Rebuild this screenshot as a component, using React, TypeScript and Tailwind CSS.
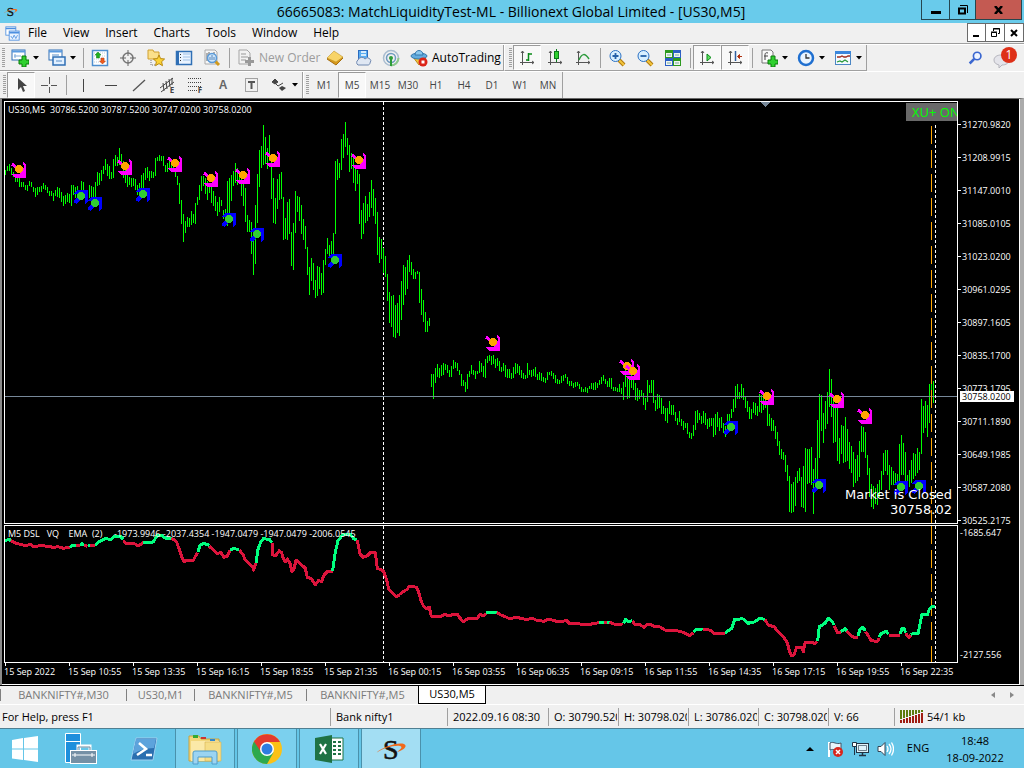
import React from 'react';

type Run = { x: number; top: number; bars: string };
type Stretch = { x: number; top: number; parts: string[] };

// high-low pairs, one bar every two pixels, three ticks to a pixel
const RUNS: Run[] = [
  {
    x: 5,
    top: 98,
    bars: `216-230 204-220 198-218 210-230 222-236 236-252 236-252 240-266 252-266 252-266 262-275 262-278 249-264 252-268 267-281
      270-297 268-290 267-282 265-282 255-272 262-275 267-285 280-293 280-293 285-308 275-293 267-297 269-299 282-311 295-323
      290-318 285-311 287-314 261-323 261-290 267-300 265-300 280-300 250-285 252-285 280-310 290-310 261-300 264-300 268-300
      252-300 222-263 225-260 217-250 204-227 183-215 198-235 205-243 222-243 183-240 171-205 178-203 150-200 168-210 190-240
      200-255 215-268 238-262 240-268 240-265 243-275 262-290 255-290 230-280 226-270 210-245 208-240 218-250 220-241 222-240
      180-234 178-190 171-188 173-188 174-205 200-222 195-222 190-215 185-215 190-220 222-238 233-262 255-318 305-377 348-432
      370-405 357-388 360-387 340-382 347-375 316-378 298-320 261-305 233-278 235-265 240-288 250-305 255-285 260-315 280-323
      293-340 312-353 296-343 305-325 336-362 333-370 250-385 240-350 231-310 219-265 195-255 210-260 222-258 235-295 254-323
      270-371 350-402 367-403 372-467 420-530 321-498`,
  },
  {
    x: 257,
    top: 98,
    bars: `228-375 156-267 144-210 81-201 117-198 150-212 111-190 170-303 240-375 300-377 243-333 228-306 222-303 297-426 360-422
      312-426 303-408 402-504 375-516 279-405 294-342 297-369 321-408 363-426 384-453 447-531 507-591 480-549 495-576 546-600
      504-594 507-573 525-591 486-585 453-501 420-468 441-475 429-470 405-468 189-408 183-246 195-240 123-216 108-180 72-147
      120-171 141-222 165-213 180-255 200-279 216-258 228-378 336-423 315-408 294-375 318-369 282-357 246-330 273-354 300-378
      342-471 417-495 423-483 450-525 474-537 528-610 582-675 594-687 591-717 621-720 615-705 591-714 549-666 501-621 507-591
      486-573 471-522 492-531 513-543 522-543 519-528 522-615 573-651 606-672 642-702 669-702 660-683`,
  },
  {
    x: 431,
    top: 320,
    bars: `162-201 162-237 144-189 132-171 144-174 135-168 129-165 132-150 135-159 150-171 138-171 120-147 126-144 129-153 150-165
      162-198 180-198 186-216 162-207 153-171 135-162 150-165 153-177 153-162 123-159 129-156 138-171 117-174 108-129 105-123
      108-135 105-132 117-144 114-138 123-153 141-156 129-153 135-171 147-174 147-174 159-177 141-174 129-162 132-159 138-165
      150-174 159-177 165-177 129-174 150-165 150-171 147-168 141-171 162-180 156-180 159-183 171-186 174-189 156-180 156-165
      153-168 159-177 165-189 177-192 180-192 168-189 165-183 162-174 171-192 183-198 183-198 189-204 186-201 186-198 192-207
      201-216 207-216 201-216 204-219 198-207 189-207 189-210 186-210 189-204 180-195 171-192 165-183 177-192 183-201 174-201
      174-207 201-213 201-213 204-216 192-216 204-222 186-240 150-201 170-237 170-234 165-204 180-210 189-240 204-243 210-237
      210-231 219-255 234-270 180-246 195-219 180-219 180-249 240-273 222-267 225-264 234-282 258-282 264-303 264-309 243-282
      255-285 255-285 276-303 294-315 273-306 297-318 303-330 309-324 309-342 336-354 339-357 315-348 273-330 270-309 279-300
      288-312 273-309 279-315 297-327 294-321 294-318 294-351 282-345 276-321 294-333`,
  },
  {
    x: 721,
    top: 350,
    bars: `201-234 219-249 228-261 192-225 192-225 177-205 147-186 108-174 102-147 126-147 102-144 114-150 141-174 153-186 171-207
      177-207 156-189 159-195 168-198 132-186 135-189 140-180 145-175 165-228 192-228 204-243 210-243 228-267 246-288 273-315
      297-327 306-330 315-366 345-393 378-486 402-489 396-486 381-468 363-399 354-393 381-471 348-474 294-486 297-402 297-399
      291-405 357-492 324-390 210-390 132-324 135-243 189-279 153-237 126-222 57-171 87-201 150-279 165-276 174-333 264-342
      225-312 228-339 201-336 237-333 276-357 288-369 306-411 327-399 315-393 273-381 228-306 231-306 246-324 315-375 354-441
      402-471 408-477 414-462 402-465 390-441 363-420 309-375 300-363 300-375 345-420 351-405 363-405 369-400 372-400 282-405
      255-375 279-375 306-400 375-410 360-410 330-400 309-387 312-378 294-369 306-360 147-312 168-249 153-234 165-261 102-219
      93-168 93-159`,
  },
];

// "u" parts are rising, "d" parts falling
const STRETCHES: Stretch[] = [
  {
    x: 0,
    top: 520,
    parts: [
      'u 16,60 22,60 28,58 32,62',
      'd 32,62 48,70 68,75 80,77 90,72 98,79 130,77 160,82 175,80 190,85 210,82',
      'u 210,82 215,77 230,77',
      'd 228,77 240,77',
      'u 240,75 246,71 252,75',
      'd 252,75 262,79',
      'u 264,77 272,74',
      'd 270,77 284,77',
      'u 286,76 300,63 316,56 332,58 345,48 362,50 370,58',
      'd 370,62 378,70 402,70 414,78 424,72 430,66',
      'u 430,67 445,66 460,66 470,48 485,46 495,54 515,54',
      'd 515,54 530,66 548,118 553,125 560,121 580,121 592,98',
      'u 594,95 600,76 610,70 628,76',
      'd 628,79 640,90 652,101 662,97 672,112 682,108 690,92',
      'u 690,90 700,86 718,88',
      'd 718,90 730,106 736,120 748,132 758,140 761,150 768,130',
      'u 768,128 774,88 782,66 790,56 808,58 816,68',
      'd 816,68 818,104 826,108 838,92 845,98 850,115 856,125 862,117 870,130 876,155 882,148 888,120 900,130 916,145 922,172 934,176 946,194 955,182 965,184 972,165 982,155 998,153',
      'u 998,152 1006,95 1014,62 1028,44 1050,42 1060,55 1070,60',
      'd 1072,60 1080,102 1090,112 1104,106 1110,98 1126,98 1132,145 1150,152 1160,180 1166,208 1188,230 1200,225',
    ],
  },
  {
    x: 400,
    top: 580,
    parts: [
      'd 0,44 12,33 22,28 27,18 50,22 58,42 64,65 72,80 78,86 88,82 94,108 125,108 135,103 148,108 160,103 172,103 178,112 190,125 205,115 232,115 240,103 250,108 258,100',
      'u 258,98 290,98',
      'd 290,98 305,106 320,112 328,116 350,112 375,118 400,116 410,121 420,120 430,125 445,118 462,121 470,125 500,122 508,130 530,130 545,133 570,133 597,128',
      'u 597,127 612,127',
      'd 612,127 620,127',
      'u 620,127 630,127',
      'd 628,127 645,133 668,132',
      'u 670,130 677,118 685,126 696,122',
      'd 697,123 706,135 718,133 732,142 742,133 755,135 765,141 775,138 795,150 820,150 850,157 870,167 880,158',
      'u 880,156 888,148 908,147',
      'd 908,147 932,151 942,161 975,162',
      'u 975,159 995,145 1004,118 1022,117',
    ],
  },
  {
    x: 700,
    top: 520,
    parts: [
      'u 120,295 132,298 145,310 165,305 178,295 195,298',
      'd 195,299 205,315 222,320 234,335 250,350 262,368 268,392 275,407 282,405 290,382 305,382 310,395 316,366 335,366 345,371 352,364',
      'u 353,362 358,320 375,310 385,295 395,303 403,315',
      'd 403,317 412,337 422,337',
      'u 422,335 436,326 440,332',
      'd 440,333 452,346 462,352 474,352',
      'u 474,348 480,328 488,322 496,332',
      'd 497,335 514,362 532,364 538,355',
      'u 538,352 542,342 558,333 566,342',
      'd 566,345 600,346',
      'u 600,342 606,326 612,326 617,338',
      'd 617,340 626,352 632,346',
      'u 632,344 640,340 655,340 662,300 666,284 682,285 688,268 698,259 706,259',
    ],
  },
];

const SELLS = [[19, 169], [125, 166], [175, 163], [211, 178], [243, 175], [273, 158], [359, 160], [493, 342], [627, 366], [633, 371], [767, 396], [837, 399], [865, 415]];
const BUYS = [[81, 196], [95, 203], [143, 194], [229, 219], [257, 234], [335, 260], [731, 427], [819, 485], [901, 487], [919, 486]];

const PRICES = ['31270.9820', '31208.9915', '31147.0010', '31085.0105', '31023.0200', '30961.0295', '30897.1605', '30835.1700', '30773.1795', '30711.1890', '30649.1985', '30587.2080', '30525.2175'];
const TIMES = ['15 Sep 2022', '15 Sep 10:55', '15 Sep 13:35', '15 Sep 16:15', '15 Sep 18:55', '15 Sep 21:35', '16 Sep 00:15', '16 Sep 03:55', '16 Sep 06:35', '16 Sep 09:15', '16 Sep 11:55', '16 Sep 14:35', '16 Sep 17:15', '16 Sep 19:55', '16 Sep 22:35'];
const MENUS = ['File', 'View', 'Insert', 'Charts', 'Tools', 'Window', 'Help'];
const FRAMES = ['M1', 'M5', 'M15', 'M30', 'H1', 'H4', 'D1', 'W1', 'MN'];

const barsPath = RUNS.map((run) =>
  run.bars.trim().split(/\s+/).map((pair, i) => {
    const [hi, lo] = pair.split('-').map((n) => run.top + Math.round(Number(n) / 3));
    return `M${run.x + i * 2 + 0.5} ${hi}V${lo}`;
  }).join('')
).join('');

const lines = STRETCHES.flatMap((s) =>
  s.parts.map((part) => {
    const [dir, ...pts] = part.split(' ');
    const points = pts.map((p) => {
      const [x, y] = p.split(',').map(Number);
      return `${(s.x + x / 3).toFixed(1)},${(s.top + y / 3).toFixed(1)}`;
    }).join(' ');
    return { up: dir === 'u', points };
  })
);

const Grip = () => (
  <span className="flex w-1.5 shrink-0 items-center justify-center">
    <span className="h-5 w-[3px] bg-[repeating-linear-gradient(#a0a0a0_0_1px,#f0f0f0_1px_2px)]" />
  </span>
);

const Sep = () => (
  <span className="flex w-1.5 shrink-0 items-center justify-center">
    <span className="h-5 w-px bg-[#a0a0a0]" />
  </span>
);

const Caret = () => (
  <svg width="6" height="4" viewBox="0 0 6 4" className="shrink-0"><path d="M0 0h6L3 3.5z" fill="#000" /></svg>
);

const Tool = ({ label, pressed = false, caret = false, children }: { label: string; pressed?: boolean; caret?: boolean; children: React.ReactNode }) => (
  <button
    aria-label={label}
    className={`flex shrink-0 items-center border ${caret ? 'w-[37px]' : 'w-7'} ${pressed ? 'border-t-[#9a9a9a] border-r-white border-b-white border-l-[#9a9a9a] bg-[#f8f8f8]' : 'border-transparent'}`}
  >
    <span className="flex w-[26px] shrink-0 justify-center">{children}</span>
    {caret && <Caret />}
  </button>
);

const Icon = ({ size = 18, children }: { size?: number; children: React.ReactNode }) => (
  <svg width={size} height={size} viewBox="0 0 18 18" fill="none" className="shrink-0">{children}</svg>
);

const Axes = () => (
  <path d="M4.500 2v14M2 13.500h14M3 4l1.500-2 1.500 2M14 12l2 1.500-2 1.500" stroke="#555" />
);

const Plus = () => (
  <path d="M11 7h4v4h3v4h-3v3h-4v-3H8v-4h3z" fill="#2fd02f" stroke="#0a7a0a" />
);

const Lens = ({ minus = false }: { minus?: boolean }) => (
  <Icon>
    <path d="M11 11l5 5" stroke="#b07a10" strokeWidth="4" />
    <path d="M11 11l5 5" stroke="#f3c43c" strokeWidth="2" />
    <circle cx="7.500" cy="7" r="5.500" fill="#d8efff" stroke="#2d72c4" />
    <path d={minus ? 'M4.500 7h6' : 'M4.500 7h6M7.500 4v6'} stroke="#2560a8" strokeWidth="1.800" />
  </Icon>
);

const Swoosh = ({ size }: { size: number }) => (
  <svg width={size} height={size} viewBox="0 0 32 32" fill="none">
    <text x="8" y="26" fontSize="28" fontFamily="Liberation Serif, serif" fill="#111" stroke="#111" strokeWidth=".6">S</text>
    <path d="M1 20C8 14 22 9 29 11c4 2 0 6-7 8 4-3 6-5 3-6-6-1-17 2-24 7z" fill="#f26a1b" />
  </svg>
);

const TitleBar = () => (
  <header className="relative flex h-[23px] items-center bg-[#69cbeb] pr-5 pl-[3px]">
    <Swoosh size={15} />
    <h1 className="flex-1 text-center text-[14px] leading-5">66665083: MatchLiquidityTest-ML - Billionext Global Limited - [US30,M5]</h1>
    <div className="absolute top-0 right-0.5 flex h-5 border border-t-0 border-[#25464f]">
      <button aria-label="Minimize" className="flex w-7 items-center justify-center border-r border-[#25464f]"><svg width="10" height="8"><path d="M0 5h10v3H0z" /></svg></button>
      <button aria-label="Restore" className="flex w-[26px] items-center justify-center border-r border-[#25464f]">
        <svg width="10" height="10" fill="none"><path d="M1 3.500h6v5H1z" stroke="#000" strokeWidth="2" /><path d="M2 .5h7.500V8" stroke="#000" /></svg>
      </button>
      <button aria-label="Close" className="flex w-[45px] items-center justify-center bg-[#c45a52]"><svg width="9" height="8"><path d="M1 0l7 8M8 0L1 8" stroke="#000" strokeWidth="2.500" /></svg></button>
    </div>
  </header>
);

const MenuBar = () => (
  <nav className="flex h-[21px] items-center border-b border-[#a0a0a0] pl-[5px] text-[12px]">
    <Icon size={15}>
      <rect x="1" y="1" width="12" height="10" fill="#fff" stroke="#4d8fe0" />
      <rect x="5" y="6" width="12" height="11" fill="#eaf3ff" stroke="#4d8fe0" />
      <path d="M1 3h12M5 8h12" stroke="#4d8fe0" strokeWidth="2" />
      <path d="M7 12l2 3 2-4 2 4 2-4" stroke="#4d8fe0" />
    </Icon>
    <ul className="flex flex-1 gap-4 pl-2">
      {MENUS.map((m) => <li key={m}><button>{m}</button></li>)}
    </ul>
    <div className="flex h-[19px] shrink-0 self-start border border-[#6a6a6a] bg-white">
      <button aria-label="Minimize chart" className="flex w-[18px] items-center justify-center border-r border-[#6a6a6a]"><svg width="7" height="8"><path d="M0 6h6v2H0z" /></svg></button>
      <button aria-label="Restore chart" className="flex w-[19px] items-center justify-center border-r border-[#6a6a6a]">
        <svg width="9" height="9" fill="none"><path d="M.5 4.500h5v4h-5zM2.500 3V.5h6v5H7M0 4h6M2 1h7" stroke="#000" /></svg>
      </button>
      <button aria-label="Close chart" className="flex w-[18px] items-center justify-center"><svg width="8" height="8"><path d="M1 1l6 6M7 1L1 7" stroke="#000" strokeWidth="2" /></svg></button>
    </div>
  </nav>
);

const StandardBar = () => (
  <div className="flex h-[27px] justify-between border-t border-white text-[12px]">
    <div className="flex border-r border-b border-[#a0a0a0]">
      <Grip />
      <Tool label="New chart" caret><Icon><rect x="1" y="1" width="13" height="10" fill="#fff" stroke="#2f6fb5" /><path d="M1 2.500h13" stroke="#5a9be0" strokeWidth="2" /><path d="M4 5v4M3 7h7" stroke="#7aa7d8" /><Plus /></Icon></Tool>
      <Tool label="Profiles" caret><Icon><rect x="1" y="1" width="13" height="10" fill="#fff" stroke="#2f6fb5" /><path d="M1 2.500h13" stroke="#5a9be0" strokeWidth="2" /><rect x="5" y="8" width="12" height="8" fill="#e2f0ff" stroke="#2f6fb5" strokeWidth="1.500" /><path d="M4 6h7M8 12h6" stroke="#5a8fc8" /></Icon></Tool>
      <Sep />
      <Tool label="Market Watch"><Icon><rect x="1.500" y="1.500" width="15" height="15" fill="#fff" stroke="#4d8fd0" strokeWidth="1.500" /><path d="M3 4h12M3 7h12M3 10h12M3 13h12" stroke="#bcd" strokeDasharray="1 1" /><path d="M7 3l3 3H8.500v3h-3V6H4z" fill="#1fb01f" stroke="#0c800c" strokeWidth=".5" /><path d="M11.500 15l-3-3H10V9h3v3h1.500z" fill="#ef5a1c" stroke="#b03a0c" strokeWidth=".5" /></Icon></Tool>
      <Tool label="Navigator"><Icon><circle cx="9" cy="9" r="5" stroke="#777" strokeWidth="1.500" /><path d="M9 1v6M9 11v6M1 9h6M11 9h6" stroke="#666" /></Icon></Tool>
      <Tool label="Favorites"><Icon><path d="M1 3V1h5l1 2h5v7H1z" fill="#fbe08a" stroke="#d0a030" /><path d="M4 11v5h4" stroke="#777" strokeDasharray="1 1" /><path d="M12 6l1.600 3.600 4 .4-3 2.700.9 4-3.500-2.100-3.500 2.100.9-4-3-2.700 4-.4z" fill="#fbd235" stroke="#b98a12" /></Icon></Tool>
      <Tool label="Data window"><Icon><rect x="1.500" y="2.500" width="15" height="13" fill="#eaf4ff" stroke="#2f6fb5" strokeWidth="1.500" /><path d="M3 3v12" stroke="#2f6fb5" strokeWidth="2" /><path d="M8 5h7M8 8h7M8 11h7" stroke="#9cc0e8" /><path d="M5.500 5v8" stroke="#333" strokeDasharray="1 2" /></Icon></Tool>
      <Tool label="Strategy tester"><Icon><path d="M2 1h10l2 2v12H2z" fill="#f6f6f6" stroke="#aaa" /><path d="M4 4v8M6 3v5M11 3v4" stroke="#666" /><path d="M12 12l4 4" stroke="#d29a1c" strokeWidth="3" /><circle cx="9" cy="9" r="4.500" fill="#cde6fb" stroke="#5b9ad8" strokeWidth="1.500" /><path d="M7 11V8M9 11V6M11 11V8" stroke="#5b86b8" /></Icon></Tool>
      <Sep />
      <button className="flex w-[89px] shrink-0 items-center pl-[5px] text-[#9c9c9c]">
        <Icon><path d="M2 1h8l3 3v11H2z" fill="#f2f2f2" stroke="#a5a5a5" /><path d="M4 5h5M4 8h7M4 11h5" stroke="#999" /><path d="M11 8h3v3h3v3h-3v3h-3v-3H8v-3h3z" fill="#999" /></Icon>
        <span className="pl-1 whitespace-nowrap">New Order</span>
      </button>
      <Tool label="MetaEditor"><Icon><path d="M1 10l7-7 9 6-7 7z" fill="#d89a1c" stroke="#a66f10" /><path d="M1 9l7-7 9 6-7 5z" fill="#f8d468" stroke="#b98a20" strokeWidth=".5" /></Icon></Tool>
      <Tool label="Hosting"><Icon><rect x="4.500" y="1.500" width="9" height="9" fill="#5aacf0" stroke="#2a6cc0" /><path d="M7 3h5M7 6h5" stroke="#fff" strokeWidth="1.500" /><path d="M4 16a3 3 0 010-5 4 4 0 017-1 3 3 0 015 4c0 1-1 2-2 2z" fill="#dfe7f3" stroke="#6f88b0" /></Icon></Tool>
      <Tool label="Signals"><Icon><circle cx="9" cy="9" r="7.500" stroke="#a9bdd0" strokeWidth="1.500" /><circle cx="9" cy="9" r="4.500" stroke="#6f9ac0" strokeWidth="1.500" /><path d="M9 16.500A7.500 7.500 0 0016.500 9" stroke="#8cc88c" strokeWidth="2" /><circle cx="9" cy="9" r="2" fill="#2e9c3a" /><path d="M9 9v8" stroke="#2e9c3a" strokeWidth="2" /></Icon></Tool>
      <button className="flex w-[98px] shrink-0 items-center pl-[5px]">
        <Icon><path d="M3 8l6 8 7-7z" fill="#f2c63c" stroke="#b88a1a" /><ellipse cx="9" cy="7" rx="8" ry="3" fill="#62acdf" stroke="#3578ad" /><path d="M5 6c0-6 8-6 8 0z" fill="#8bc8ee" stroke="#3578ad" /><circle cx="13" cy="13" r="4.500" fill="#dc2418" /><path d="M11.500 11.500h3v3h-3z" fill="#fff" /></Icon>
        <span className="pl-1">AutoTrading</span>
      </button>
    </div>
    <div className="flex border-r border-b border-l border-[#a0a0a0] border-l-white pl-0.5">
      <Grip />
      <Tool label="Bar chart" pressed><Icon><Axes /><path d="M10.500 4v8M8 11h2M11 5h3" stroke="#0a8a1a" strokeWidth="1.500" /></Icon></Tool>
      <Tool label="Candlesticks"><Icon><Axes /><path d="M10.500 0v13" stroke="#0a7a1a" /><rect x="8.500" y="2.500" width="4" height="7" fill="#2fd02f" stroke="#0a7a1a" /></Icon></Tool>
      <Tool label="Line chart"><Icon><Axes /><path d="M5 11c3-7 6-7 10-1" stroke="#2a9a3a" strokeWidth="1.500" /></Icon></Tool>
      <Sep />
      <Tool label="Zoom in"><Lens /></Tool>
      <Tool label="Zoom out"><Lens minus /></Tool>
      <Tool label="Tile windows"><Icon><path d="M1 1h8v8H1zM9 9h8v8H9z" fill="#2e9a20" /><path d="M9 1h8v8H9zM1 9h8v8H1z" fill="#2c5fc4" /><path d="M2 4h6v4H2zM10 4h6v4h-6zM2 12h6v4H2zM10 12h6v4h-6z" fill="#f0f6f0" /><path d="M3 6h4M11 6h4M3 14h4M11 14h4" stroke="#79a9a0" /></Icon></Tool>
      <Sep />
      <Tool label="Auto scroll" pressed><Icon><Axes /><path d="M9 5l4 3.500L9 12z" fill="#5fe05f" stroke="#0a8a1a" /></Icon></Tool>
      <Tool label="Chart shift" pressed><Icon><Axes /><path d="M9.500 2v10" stroke="#2f5fa0" strokeWidth="1.500" /><path d="M16 7.500h-4M13.500 5.500L11.500 7.500l2 2z" stroke="#b03010" fill="#b03010" /></Icon></Tool>
      <Sep />
      <Tool label="Indicators" caret><Icon><path d="M2 1h9l2 2v11H2z" fill="#fafafa" stroke="#777" /><path d="M8 4c-3-1-3 1-3 3v4M4 7h4" stroke="#444" /><Plus /></Icon></Tool>
      <Tool label="Periods" caret><Icon><circle cx="9" cy="9" r="7" fill="#e9f4ff" stroke="#1f6fd0" strokeWidth="2.500" /><path d="M9 5v4h3.500" stroke="#333" strokeWidth="1.300" /></Icon></Tool>
      <Tool label="Templates" caret><Icon><rect x="1.500" y="2.500" width="15" height="13" fill="#f4faff" stroke="#4b86c4" /><path d="M1 3.500h16" stroke="#3a86dc" strokeWidth="3" /><path d="M3 8h3l2-1 2 1h2l2-1h2" stroke="#a02c1c" strokeWidth="1.300" /><path d="M3 13l3-1 2 1 3-2 3 2" stroke="#2a9a3a" strokeWidth="1.300" /></Icon></Tool>
    </div>
    <div className="flex flex-1 items-center justify-end gap-2.5 pr-[7px]">
      <button aria-label="Search"><Icon size={15}><circle cx="11" cy="6" r="4.500" fill="#eef4ff" stroke="#3a66d0" strokeWidth="2" /><path d="M7.500 9.500L2 15" stroke="#3a66d0" strokeWidth="3" /></Icon></button>
      <button aria-label="Notifications" className="relative flex h-5 w-6 items-end">
        <svg width="18" height="16" viewBox="0 0 18 16"><path d="M8 3c5 0 8 2 8 5s-3 5-7 5l-3 3v-3C3 12 1 11 1 8s3-5 7-5z" fill="#e4e4ea" stroke="#b5b5bd" /></svg>
        <span className="absolute -top-px right-0 flex size-4 items-center justify-center rounded-full bg-[#de3018] text-[12px] text-white">1</span>
      </button>
    </div>
  </div>
);

const LineBar = () => (
  <div className="flex h-[27px] border-t border-white text-[10px] text-[#444]">
    <div className="flex border-r border-[#a0a0a0] pl-px">
      <Grip />
      <Tool label="Cursor" pressed><Icon><path d="M6 2v12l3-3 2 5 2-1-2-5h4z" fill="#444" /></Icon></Tool>
      <Tool label="Crosshair"><Icon><path d="M9.500 1v7M9.500 11v6M1 9.500h7M11 9.500h6" stroke="#555" /></Icon></Tool>
      <Sep />
      <Tool label="Vertical line"><Icon><path d="M9.500 3v13" stroke="#444" /></Icon></Tool>
      <Tool label="Horizontal line"><Icon><path d="M3 9.500h12" stroke="#444" /></Icon></Tool>
      <Tool label="Trendline"><Icon><path d="M3 15L15 4" stroke="#555" strokeWidth="1.300" /></Icon></Tool>
      <Tool label="Equidistant channel">
        <span className="flex items-end"><svg width="14" height="16" fill="none"><path d="M0 11L13 1M1 15L14 5M3 6l1 8M6 4l1 8M9 2l1 8M12 1l0 7" stroke="#444" /></svg><span className="-ml-1 text-[8px] leading-[7px] font-bold">E</span></span>
      </Tool>
      <Tool label="Fibonacci">
        <span className="flex items-end"><svg width="14" height="16" fill="none"><path d="M0 1.500h14M0 5.500h14M0 9.500h14M0 13.500h9" stroke="#444" strokeDasharray="1 1" /></svg><span className="-ml-1 text-[8px] leading-[7px] font-bold">F</span></span>
      </Tool>
      <Tool label="Text"><span className="font-['Liberation_Sans',sans-serif] text-[12px] font-bold text-[#666]">A</span></Tool>
      <Tool label="Text label"><Icon><rect x="3.500" y="2.500" width="12" height="13" stroke="#555" strokeDasharray="1 1" /><path d="M6 6h7M9.500 6v7" stroke="#555" strokeWidth="2" /></Icon></Tool>
      <Tool label="Arrows" caret><Icon><path d="M2 6l3-3 3 3-3 2zM5 7l3 3 5-3" stroke="#444" /><path d="M2 6l3-3 3 3-3 2z" fill="#444" /><path d="M9 12l3-2 4 2-4 3z" fill="#444" /></Icon></Tool>
    </div>
    <div className="flex border-r border-l border-[#a0a0a0] border-l-white">
      <Grip />
      {FRAMES.map((f) => <Tool key={f} label={f} pressed={f === 'M5'}>{f}</Tool>)}
    </div>
  </div>
);

const Marker = ({ x, y, buy = false }: { x: number; y: number; buy?: boolean }) => (
  <g transform={`translate(${x} ${y})`}>
    {buy ? (
      <>
        <path d="M-4-6H7V6L4 8V-1L-7-2z" fill="#0000ff" />
        <path d="M0 0l-6 7" stroke="#0000ff" strokeWidth="4" />
      </>
    ) : (
      <>
        <path d="M4-7L7-4V9H-4L-7 5H1L5-2z" fill="#ff00ff" />
        <path d="M0 1l-7-6" stroke="#ff00ff" strokeWidth="3" />
      </>
    )}
    <circle r="4" fill={buy ? '#32cd32' : '#ffa500'} />
  </g>
);

const Chart = () => (
  <main className="border-t border-r-4 border-l-2 border-t-[#696969] border-r-[#ababab] border-l-[#8a8a8a] bg-black text-[9px] text-white">
    <div className="border-r border-b border-white pt-0.5 pl-0.5">
      <div className="flex">
        <div className="relative min-w-0 flex-1 border border-white">
          <svg viewBox="5 102 952 421" preserveAspectRatio="xMaxYMin slice" className="block h-[421px] w-full" fill="none" shapeRendering="crispEdges">
            <path d="M383.500 102V523" stroke="#fff" strokeDasharray="3 2" />
            <path d={barsPath} stroke="#00ff00" />
            <path d="M5 396.500H957" stroke="#778899" />
            <path d="M931.500 126V523" stroke="#ffa500" strokeDasharray="18 6" />
            <path d="M935.500 125V523" stroke="#fff" strokeDasharray="3 2" />
            <path d="M761 102h9l-4.500 5z" fill="#778899" />
            {SELLS.map(([x, y]) => <Marker key={x} x={x} y={y} />)}
            {BUYS.map(([x, y]) => <Marker key={x} x={x} y={y} buy />)}
          </svg>
          <p className="absolute top-0.5 left-[3px] leading-3 whitespace-pre">US30,M5  30786.5200 30787.5200 30747.0200 30758.0200</p>
          <div className="absolute top-px right-0 h-[18px] w-[51px] overflow-hidden bg-[#696969] pl-1.5 text-[13px] leading-[18px] whitespace-nowrap text-[#00ff00]">XU+ ON</div>
          <p className="absolute right-[5px] bottom-1.5 text-right font-['DejaVu_Sans',sans-serif] text-[13px] leading-[15px]">Market is Closed<br />30758.02</p>
        </div>
        <ul className="relative h-[423px] w-[61px] shrink-0 pt-[7px]">
          {PRICES.map((p) => (
            <li key={p} className="flex h-[33px] items-center gap-px"><span className="h-px w-[3px] bg-white" />{p}</li>
          ))}
          <li className="absolute top-[290px] left-0.5 w-[54px] bg-white pl-0.5 leading-[11px] text-black">30758.0200</li>
        </ul>
      </div>
      <div className="flex pt-px">
        <div className="relative min-w-0 flex-1 border border-white">
          <svg viewBox="5 526 952 136" preserveAspectRatio="xMaxYMin slice" className="block h-[136px] w-full" fill="none" shapeRendering="crispEdges">
            <path d="M383.500 526V662" stroke="#fff" strokeDasharray="3 2" />
            <path d="M931.500 526V662" stroke="#ffa500" strokeDasharray="18 6" />
            <path d="M935.500 526V662" stroke="#fff" strokeDasharray="3 2" />
            {lines.map((l, i) => <polyline key={i} points={l.points} stroke={l.up ? '#00ff7f' : '#dc143c'} strokeWidth="3" strokeLinejoin="round" />)}
          </svg>
          <p className="absolute top-0.5 left-[3px] leading-3 whitespace-pre">M5 DSL   VQ    EMA  (2)     -1973.9946 -2037.4354 -1947.0479 -1947.0479 -2006.0545</p>
        </div>
        <div className="flex w-[61px] shrink-0 flex-col justify-between bg-black py-0.5 pl-0.5 leading-3">
          <span>-1685.647</span>
          <span>-2127.556</span>
        </div>
      </div>
      <ul className="flex h-[21px] overflow-hidden pl-px">
        {TIMES.map((t) => (
          <li key={t} className="w-16 shrink-0 whitespace-nowrap"><span className="block h-[3px] w-px bg-white" /><span className="-ml-px block leading-3">{t}</span></li>
        ))}
      </ul>
    </div>
  </main>
);

const ChartTabs = () => (
  <div className="flex h-5 items-stretch border-t border-b border-t-black border-b-white text-[11px] text-[#7a7a7a]">
    <div className="flex flex-1 items-center">
      <button className="w-[126px] border-l border-[#808080] leading-3">BANKNIFTY#,M30</button>
      <button className="w-[68px] border-l border-[#808080] leading-3">US30,M1</button>
      <button className="w-28 border-l border-[#808080] leading-3">BANKNIFTY#,M5</button>
      <button className="w-28 border-l border-[#808080] leading-3">BANKNIFTY#,M5</button>
      <button className="w-[68px] self-stretch border border-t-0 border-black bg-white text-black">US30,M5</button>
    </div>
    <div className="flex items-center gap-[15px] pr-2.5">
      <button aria-label="Scroll left"><svg width="4" height="6" className="block"><path d="M4 0v6L0 3z" fill="#888" /></svg></button>
      <button aria-label="Scroll right"><svg width="4" height="6" className="block"><path d="M0 0v6l4-3z" fill="#888" /></svg></button>
    </div>
  </div>
);

const StatusBar = () => (
  <div className="flex h-[23px] items-center text-[11px] leading-[18px] whitespace-nowrap">
    <span className="flex-1 pl-0.5">For Help, press F1</span>
    <span className="w-[117px] border-l border-[#a0a0a0] pl-[5px]">Bank nifty1</span>
    <span className="w-[101px] border-l border-[#a0a0a0] pl-[5px]">2022.09.16 08:30</span>
    {['O: 30790.520', 'H: 30798.020', 'L: 30786.020', 'C: 30798.020'].map((v) => (
      <span key={v} className="w-[70px] border-l border-[#a0a0a0] pr-px pl-[5px]"><span className="block w-full overflow-hidden">{v}</span></span>
    ))}
    <span className="w-[66px] border-l border-[#a0a0a0] pl-[5px]">V: 66</span>
    <span className="flex w-[130px] items-center gap-1 border-l border-[#a0a0a0] pl-[5px]">
      <svg width="23" height="13">
        {[0, 3, 6, 9, 12, 15, 18, 21].map((x, i) => (
          <g key={x}>
            <rect x={x} y="0" width="2" height={9 - i} fill="#5c7a0c" />
            <rect x={x} y={10 - i} width="2" height={3 + i} fill="#a01c10" />
          </g>
        ))}
      </svg>
      54/1 kb
    </span>
  </div>
);

const Taskbar = () => (
  <footer className="flex h-10 items-stretch border-t border-[#4f7f92] bg-[#65c6e8] text-[11px]">
    <button aria-label="Start" className="flex w-[50px] items-center justify-center">
      <svg width="28" height="28" viewBox="0 0 28 28" fill="#fff"><path d="M1 5l11-2v10.500H1zM13 3l14-2v12.500H13zM1 14.500h11V25L1 23.500zM13 14.500h14V27l-14-2z" /></svg>
    </button>
    <button aria-label="Server Manager" className="flex w-[62px] items-center justify-center">
      <svg width="34" height="34" viewBox="0 0 34 34"><path d="M1.500 1.500h15v29h-15z" fill="#1e8fdc" stroke="#fff" /><path d="M2 9.500h14" stroke="#fff" /><path d="M14 18v-4h12v4" fill="none" stroke="#fff" strokeWidth="3" /><path d="M14 18v-3h12v3" fill="none" stroke="#6c8ba0" /><rect x="6.500" y="18.500" width="26" height="13" fill="#7590a5" stroke="#fff" /><path d="M8 23h23M11 21v4M28 21v4" stroke="#fff" /></svg>
    </button>
    <button aria-label="PowerShell" className="flex w-[63px] items-center justify-center">
      <svg width="28" height="24" viewBox="0 0 28 24"><path d="M6 1h21l-4 22H1z" fill="#2b6fb0" stroke="#9fd0f0" /><path d="M6 2h20l-2 9C16 11 9 13 3 17z" fill="#5da3dc" /><path d="M9 6l7 6-9 6M16 18h6" fill="none" stroke="#fff" strokeWidth="2.500" /></svg>
    </button>
    <div className="flex flex-1 gap-0.5">
      <button aria-label="File Explorer" className="flex w-[60px] items-center justify-center border-x border-[#4a91ab] bg-[#7bd0ee]">
        <svg width="34" height="32" viewBox="0 0 34 32"><path d="M1 28V3h10l2 3h18v22z" fill="#f2d77c" stroke="#c8a240" /><path d="M5 2h5v3H5z" fill="#3a3" /><path d="M13 4h5v2h-5z" fill="#c33" /><path d="M22 6h5v2h-5z" fill="#38c" /><path d="M3 8h28v20H3z" fill="#fbe9a8" /><path d="M17 9h16v19H17z" fill="#f6dd86" stroke="#d6b252" strokeWidth=".6" /><path d="M5 31V20q0-2 2-2h20q2 0 2 2v11h-5v-7H10v7z" fill="#9bd4f2" stroke="#4f9dcb" /></svg>
      </button>
      <button aria-label="Chrome" className="flex w-[60px] items-center justify-center border-x border-[#4a91ab] bg-[#7bd0ee]">
        <svg width="30" height="30" viewBox="0 0 30 30"><circle cx="15" cy="15" r="15" fill="#fbc116" /><path d="M2 7.500A15 15 0 0015 30l6.500-11.500L15 15z" fill="#2da94f" /><path d="M2 7.500A15 15 0 0128 8H15L9 18z" fill="#e33b2e" /><circle cx="15" cy="15" r="7" fill="#fff" /><circle cx="15" cy="15" r="5.500" fill="#2f7de1" /></svg>
      </button>
      <button aria-label="Excel" className="flex w-[60px] items-center justify-center border-x border-[#4a91ab] bg-[#7bd0ee]">
        <svg width="30" height="30" viewBox="0 0 30 30"><path d="M16 4h13v22H16z" fill="#fff" stroke="#1f7244" /><path d="M19 8h3M24 8h3M19 12h3M24 12h3M19 16h3M24 16h3M19 20h3M24 20h3" stroke="#1f7244" strokeWidth="2" /><path d="M1 4l17-3v28L1 26z" fill="#1f7244" /><path d="M6 10l6 10M12 10L6 20" stroke="#fff" strokeWidth="2.200" /></svg>
      </button>
      <button aria-label="Trading terminal" className="flex w-[60px] items-center justify-center border-x border-[#4a91ab] bg-[#a3def3]"><Swoosh size={32} /></button>
    </div>
    <div className="flex items-center pr-4">
      <div className="flex items-center gap-2">
        <button aria-label="Show hidden icons"><svg width="8" height="4" className="block"><path d="M0 4h8L4 0z" fill="#000" /></svg></button>
        <svg width="18" height="18" viewBox="0 0 18 18" className="ml-1"><path d="M3 2v15" stroke="#fff" strokeWidth="2" /><path d="M4 3c4-2 6 2 11 0v7c-5 2-7-2-11 0z" fill="#e8f4fa" stroke="#456" /><circle cx="12" cy="12" r="5" fill="#d8261c" /><path d="M10 10l4 4M14 10l-4 4" stroke="#fff" strokeWidth="1.500" /></svg>
        <svg width="17" height="16" viewBox="0 0 17 16" fill="none"><rect x="4.500" y="2.500" width="12" height="9" fill="#dff2fa" stroke="#234" /><path d="M6.500 4.500h8v5h-8z" stroke="#234" strokeWidth=".6" /><path d="M7 14.500h7M10.500 12v2" stroke="#234" strokeWidth="1.500" /><path d="M.5 1.500h4v4h-4zM2.500 6v8" fill="#fff" stroke="#234" /></svg>
        <svg width="17" height="16" viewBox="0 0 17 16" fill="none"><path d="M1 5.500h3l4-4v13l-4-4H1z" fill="#fff" stroke="#345" /><path d="M10 5q2 3 0 6M12 3q4 5 0 10M14.500 1.500q4 6.500 0 13" stroke="#fff" strokeWidth="1.300" /></svg>
      </div>
      <span className="w-12 text-center">ENG</span>
      <time className="w-[66px] text-center leading-[17px]">18:48<br />18-09-2022</time>
    </div>
  </footer>
);

export default function App() {
  return (
    <div className="min-h-screen w-full overflow-hidden bg-[#f0f0f0] font-['Open_Sans','Noto_Sans',sans-serif] text-black">
      <TitleBar />
      <MenuBar />
      <StandardBar />
      <LineBar />
      <Chart />
      <ChartTabs />
      <StatusBar />
      <Taskbar />
    </div>
  );
}
